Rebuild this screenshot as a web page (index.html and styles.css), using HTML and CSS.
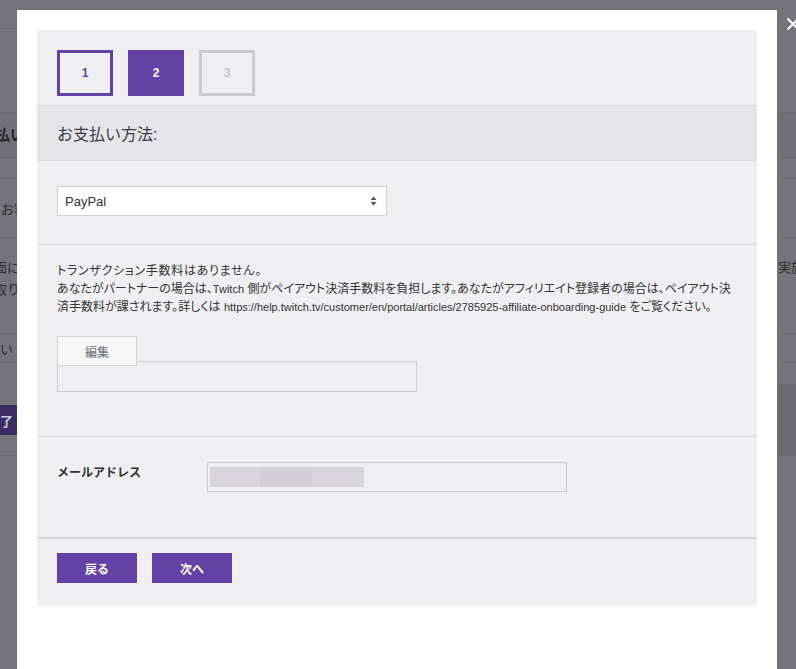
FILE: index.html
```html
<!DOCTYPE html>
<html lang="ja">
<head>
<meta charset="utf-8">
<title>お支払い方法</title>
<link rel="stylesheet" href="styles.css">
</head>
<body>
<div class="bg">
  <div class="bg-row r1"></div>
  <div class="bg-row r2"></div>
  <div class="bg-row r3"><span class="bg-head">お支払い方法</span></div>
  <div class="bg-row r4"></div>
  <div class="bg-row r5"><span class="bg-text t5">お客様</span></div>
  <div class="bg-row r6">
    <div class="bg-col"><span class="bg-text t6a">面に拒否</span><span class="bg-text t6b">取りて</span></div>
    <span class="bg-text t6r">実施</span>
  </div>
  <div class="bg-row r7"><span class="bg-text t7">支払い</span></div>
  <div class="bg-row r8">
    <span class="bg-btn">完了</span>
    <span class="bg-band"></span>
  </div>
</div>

<div class="modal">
  <div class="panel">
    <div class="steps">
      <div class="step done">1</div>
      <div class="step active">2</div>
      <div class="step todo">3</div>
    </div>
    <div class="section-head">お支払い方法:</div>
    <div class="section select-section">
      <div class="select">
        <span>PayPal</span>
        <svg class="arrows" width="7" height="10" viewBox="0 0 7 10"><path d="M3.5 0.5 L6.5 4 L0.5 4 Z M3.5 9.5 L6.5 6 L0.5 6 Z" fill="#555558"/></svg>
      </div>
    </div>
    <div class="section text-section">
      <p class="info"><span class="first">トランザクション手数料はありません。</span><br>あなたがパートナーの場合は、<span class="latin">Twitch</span> 側がペイアウト決済手数料を負担します。あなたがアフィリエイト登録者の場合は、ペイアウト決<br>済手数料が課されます。詳しくは <span class="latin">https://help.twitch.tv/customer/en/portal/articles/2785925-affiliate-onboarding-guide</span> をご覧ください。</p>
      <div class="tab">編集</div>
      <div class="tab-box"></div>
    </div>
    <div class="section email-section">
      <div class="label">メールアドレス</div>
      <div class="input">
        <span class="blur b1"></span><span class="blur b2"></span><span class="blur b3"></span>
      </div>
    </div>
    <div class="footer">
      <button class="btn">戻る</button>
      <button class="btn">次へ</button>
    </div>
  </div>
</div>

<svg class="close" width="14" height="14" viewBox="0 0 14 14"><path d="M1.5 1.5 L12.5 12.5 M12.5 1.5 L1.5 12.5" stroke="#ffffff" stroke-width="2" fill="none"/></svg>
</body>
</html>
```
FILE: styles.css
```css
html, body {
  margin: 0;
  padding: 0;
}
body {
  width: 796px;
  height: 669px;
  overflow: hidden;
  background: #76747b;
  font-family: "Liberation Sans", "Noto Sans CJK JP", sans-serif;
  position: relative;
}

/* dimmed page behind the modal */
.bg {
  width: 796px;
}
.bg-row {
  display: flex;
  justify-content: space-between;
  box-sizing: border-box;
  overflow: hidden;
  white-space: nowrap;
  font-size: 13px;
  color: #2e2d32;
}
.r1 { height: 29px; border-bottom: 1px solid #6b6970; }
.r2 { height: 83px; }
.r3 { height: 46px; border-top: 1px solid #6b6970; border-bottom: 1px solid #6b6970; background: #727077; align-items: center; }
.r4 { height: 21px; border-bottom: 1px solid #6b6970; }
.r5 { height: 59px; border-bottom: 1px solid #6b6970; align-items: center; }
.r6 { height: 96px; border-bottom: 1px solid #6b6970; }
.r7 { height: 29px; border-bottom: 1px solid #6b6970; align-items: center; }
.r8 { height: 93px; border-bottom: 1px solid #6b6970; }
.bg-head { font-size: 15px; font-weight: bold; margin-left: -35px; color: #262529; line-height: 20px; }
.t5 { margin-left: 1px; }
.bg-col { display: flex; flex-direction: column; padding-top: 19px; margin-left: -6px; line-height: 22px; }
.t6r { margin-top: 20px; margin-right: -8px; line-height: 20px; }
.t7 { margin-left: -26px; }
.bg-btn {
  margin-left: -40px;
  margin-top: 42px;
  width: 80px;
  height: 30px;
  background: #3b2c62;
  color: #cfcad8;
  font-weight: bold;
  display: flex;
  align-items: center;
  justify-content: center;
}
.bg-band {
  align-self: flex-end;
  width: 20px;
  height: 71px;
  background: #6d6b72;
}

/* modal */
.modal {
  position: absolute;
  left: 17px;
  top: 10px;
  width: 760px;
  height: 659px;
  box-sizing: border-box;
  background: #ffffff;
  padding: 20px;
}
.panel {
  background: #efeff1;
  color: #3a3a3d;
}
.steps {
  display: flex;
  gap: 15px;
  padding: 20px 20px 9px;
}
.step {
  width: 56px;
  height: 46px;
  box-sizing: border-box;
  display: flex;
  align-items: center;
  justify-content: center;
  font-size: 12px;
  font-weight: bold;
}
.step.done { border: 3px solid #6441a4; color: #6441a4; }
.step.active { background: #6441a4; color: #ffffff; }
.step.todo { border: 3px solid #cbcacf; color: #c6c5cb; }

.section-head {
  height: 56px;
  box-sizing: border-box;
  border-top: 1px solid #d9d8dd;
  border-bottom: 1px solid #dddce1;
  background: #e5e4e9;
  display: flex;
  align-items: center;
  padding-left: 20px;
  font-size: 16px;
  color: #3b3b3f;
}
.section {
  padding-left: 20px;
  padding-right: 20px;
  border-bottom: 1px solid #dad9de;
}
.select-section {
  padding-top: 25px;
  padding-bottom: 28px;
}
.select {
  width: 330px;
  height: 30px;
  box-sizing: border-box;
  border: 1px solid #d0d0d4;
  background: #ffffff;
  display: flex;
  align-items: center;
  justify-content: space-between;
  padding: 0 9px 0 7px;
  font-size: 13px;
  color: #333336;
}
.arrows { display: block; }

.text-section {
  padding-top: 17px;
  padding-bottom: 44px;
}
.info {
  margin: 0;
  font-size: 12px;
  line-height: 18px;
  color: #333336;
  font-feature-settings: "palt";
  white-space: nowrap;
}
.first {
  letter-spacing: 0.7px;
}
.latin {
  font-size: 11px;
}
.tab {
  margin-top: 20px;
  width: 80px;
  height: 30px;
  box-sizing: border-box;
  border: 1px solid #d6d6da;
  background: #f7f7f8;
  display: flex;
  align-items: center;
  justify-content: center;
  font-size: 12px;
  color: #6b6b70;
  position: relative;
  z-index: 1;
}
.tab-box {
  margin-top: -5px;
  width: 360px;
  height: 31px;
  box-sizing: border-box;
  border: 1px solid #cdccd1;
}

.email-section {
  display: flex;
  align-items: flex-start;
  padding-top: 25px;
  padding-bottom: 45px;
  border-bottom: 2px solid #d8d7dc;
}
.label {
  width: 150px;
  margin-top: 2px;
  font-size: 12px;
  line-height: 18px;
  font-weight: bold;
  color: #2f2f33;
}
.input {
  width: 360px;
  height: 30px;
  box-sizing: border-box;
  border: 1px solid #c9c8cd;
  display: flex;
  align-items: center;
  padding-left: 2px;
}
.blur { height: 20px; }
.b1 { width: 50px; background: #d8d6dc; }
.b2 { width: 52px; background: #d1cfd5; }
.b3 { width: 52px; background: #d8d6dc; }

.footer {
  display: flex;
  gap: 15px;
  padding: 14px 20px 23px;
}
.btn {
  width: 80px;
  height: 30px;
  border: none;
  margin: 0;
  padding: 0;
  background: #6441a4;
  color: #ffffff;
  font-family: "Liberation Sans", "Noto Sans CJK JP", sans-serif;
  font-size: 12px;
  font-weight: bold;
}

.close {
  position: absolute;
  left: 786px;
  top: 17px;
}
```
